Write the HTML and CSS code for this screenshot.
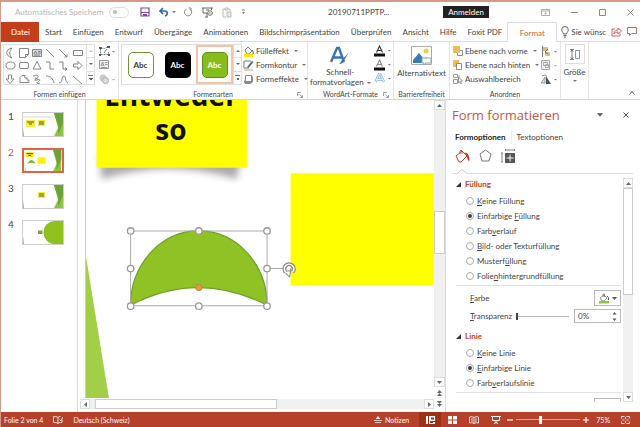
FILE: index.html
```html
<!DOCTYPE html>
<html lang="de">
<head>
<meta charset="utf-8">
<title>20190711PPTP...</title>
<link rel="stylesheet" href="styles.css">
</head>
<body>
<div class="app">
  <header class="titlebar">
    <label class="autosave">Automatisches Speichern <input type="checkbox" class="switch"></label>
    <div class="quick">
      <button aria-label="Speichern"><svg width="10" height="10" viewBox="0 0 10 10"><path d="M1 1h8v8H1z" fill="#fff" stroke="#7b45a0" stroke-width="1.2"/><path d="M1 5.5h8" stroke="#7b45a0"/><path d="M3 9V7h4v2" fill="#7b45a0"/></svg></button>
      <button aria-label="Rückgängig"><svg width="10" height="10" viewBox="0 0 10 10"><path d="M4 1 1 4l3 3M1.500 4H6c3 0 3 4.500 0 5" fill="none" stroke="#2f6da8" stroke-width="1.600"/></svg></button>
      <span class="caret"></span>
      <button aria-label="Wiederholen"><svg width="10" height="10" viewBox="0 0 10 10"><path d="M7 2.200A3.600 3.600 0 1 1 3.500 2M5.500 1H8v3" fill="none" stroke="#888"/></svg></button>
      <button aria-label="Präsentation"><svg width="11" height="11" viewBox="0 0 11 11"><path d="M0 1h11M1 1v5h4M5 6v4M3 10h3M4 3h3M9.500 1v2" fill="none" stroke="#666"/><circle cx="8" cy="6" r="2.300" fill="#fff" stroke="#666"/><path d="m7.500 5 1.500 1-1.500 1z" fill="#666"/></svg></button>
      <button aria-label="Einfügen"><svg width="10" height="11" viewBox="0 0 10 11"><path d="M3 2H1v8h3M6 2h2v2M3 1h3v2H3z" fill="none" stroke="#bbb"/><path d="M5 5h4v5H5z" fill="#e8e8e8" stroke="#bbb"/></svg></button>
      <button aria-label="Anpassen"><svg width="5" height="6" viewBox="0 0 5 6"><path d="M1 1h3" stroke="#777"/><path d="M1 3h3L2.500 5z" fill="#777"/></svg></button>
    </div>
    <span class="filename">20190711PPTP...</span>
    <button class="login">Anmelden</button>
    <div class="winctl">
      <button aria-label="Menüband"><svg width="9" height="7" viewBox="0 0 9 7"><path d="M.5.5h8v6h-8zM.5 2h8M4.500 5.500v-2M3.500 4.500l1-1 1 1" fill="none" stroke="#999" stroke-width=".8"/></svg></button>
      <button aria-label="Minimieren"><svg width="7" height="7" viewBox="0 0 7 7"><path d="M0 3.500h7" stroke="#888"/></svg></button>
      <button aria-label="Maximieren"><svg width="7" height="7" viewBox="0 0 7 7"><path d="M.5.5h6v6h-6z" fill="none" stroke="#888"/></svg></button>
      <button aria-label="Schließen"><svg width="7" height="7" viewBox="0 0 7 7"><path d="m.5.5 6 6m0-6-6 6" stroke="#777" stroke-width=".8"/></svg></button>
    </div>
  </header>

  <nav class="tabs">
    <button class="tab file">Datei</button>
    <button class="tab">Start</button>
    <button class="tab">Einfügen</button>
    <button class="tab">Entwurf</button>
    <button class="tab">Übergänge</button>
    <button class="tab">Animationen</button>
    <button class="tab">Bildschirmpräsentation</button>
    <button class="tab">Überprüfen</button>
    <button class="tab">Ansicht</button>
    <button class="tab">Hilfe</button>
    <button class="tab">Foxit PDF</button>
    <button class="tab active">Format</button>
    <div class="tellme">
      <svg width="8" height="12" viewBox="0 0 8 12"><path d="M2.500 8C2.500 6.500.7 6 .7 3.800a3.300 3.300 0 0 1 6.600 0C7.300 6 5.500 6.500 5.500 8zM2.500 9.500h3M3 11h2" fill="none" stroke="#555" stroke-width=".9"/></svg>
      <span class="hint">Sie wünsc</span>
      <button aria-label="Freigeben"><svg width="11" height="10" viewBox="0 0 11 10"><path d="M4 2H1v7h8V6.500M3 7c0-3 2-4 4-4V1l3.500 3L7 7V5C5.500 5 4 5.500 3 7z" fill="none" stroke="#c9564b" stroke-width=".9"/></svg></button>
      <button aria-label="Kommentare"><svg width="10" height="9" viewBox="0 0 10 9"><path d="M.5.5h9v6h-5l-2 2v-2h-2z" fill="none" stroke="#c9564b" stroke-width=".9"/></svg></button>
    </div>
  </nav>

  <section class="ribbon">
    <div class="group g-insert">
      <div class="row">
        <div class="gallery shapes">
          <svg width="82" height="39" viewBox="0 0 82 39" fill="none" stroke="#777" stroke-width=".9">
            <path d="M8 3C1 4 1 11 8 13 5 10 5 6 8 3z"/><path d="M15.500 3.500h9v6l-3 3h-6zM21.500 12.500v-3h3"/><path d="M28.500 4.500h9v7h-9z" fill="#d3dae6"/><path d="m30 9 1.500-3 1.500 3M34 6.500h2.500M34 8h2.500M30 10h6"/><path d="m42 4 8 8M55 4l8 8m0-2.500V12h-2.500"/><path d="M69.500 5.500h9v5h-9z"/>
            <ellipse cx="6.500" cy="20.500" rx="4.500" ry="3.500"/><rect x="15.500" y="17.500" width="9" height="6" rx="1.500"/><path d="m33 16.500 4 7.500h-8zM42 17h4v7h4M55 17h4v7h4m-2-1.500 2 1.500-2 1.500"/><path d="M69.500 19h4.500v-2.500l4 4-4 4V22h-4.500z"/>
            <path d="M4.500 30v4H2l4 4.500 4-4.500H7.500v-4z"/><path d="M16 37.500v-5l2-2h3c-1 2 0 3 2 2.500v2l2 0v2.500z"/><path d="M29 31c3-2 7 0 4 2s-3 3 0 2c3-1 4 0 1 2m2 1-2 1-1-2M31 33l3 1"/><path d="M42 31c5 0 7 3 8 7M55 38c4 0 2-7 5-7 2 0 1 6 4 7M69 31l9 8"/>
          </svg>
          <div class="spin"><button class="up" aria-label="Nach oben" disabled></button><button aria-label="Nach unten"></button><button class="more" aria-label="Mehr Formen"></button></div>
        </div>
        <div class="stack icons">
          <button aria-label="Form bearbeiten"><svg width="16" height="10" viewBox="0 0 16 10"><path d="M1.500 2.500h4l3-1.500M1.500 2.500v6h8V6" fill="none" stroke="#777" stroke-dasharray="2 1"/><path d="M0 1h3v2H0zM8 0h3v2H8zM0 8h2v2H0zM9 8h2v2H9z" fill="#557"/><path d="m5 7 3-4" stroke="#49b"/><path d="M13 5h3l-1.500 1.500z" fill="#777"/></svg></button>
          <button aria-label="Textfeld"><svg width="16" height="10" viewBox="0 0 16 10"><path d="M.5.5h9v8h-9z" fill="#eee" stroke="#999"/><path d="M2 6l1.500-4L5 6M2.500 5h2M6 2.500h2.500M6 4.500h2.500M2 7.500h6" fill="none" stroke="#777" stroke-width=".7"/></svg></button>
          <button aria-label="Formen zusammenführen"><svg width="16" height="10" viewBox="0 0 16 10"><circle cx="4" cy="4" r="3.500" fill="#ccc"/><circle cx="6.500" cy="6.500" r="3" fill="#ddd" stroke="#aaa"/><path d="M13 5h3l-1.500 1.500z" fill="#aaa"/></svg></button>
        </div>
      </div>
      <div class="caption">Formen einfügen</div>
    </div>

    <div class="group g-styles">
      <div class="row">
        <div class="gallery presets">
          <button class="preset p-outline"><span>Abc</span></button>
          <button class="preset p-black"><span>Abc</span></button>
          <button class="preset p-green"><span>Abc</span></button>
          <div class="spin"><button class="up" aria-label="Nach oben"></button><button aria-label="Nach unten"></button><button class="more" aria-label="Mehr Formate"></button></div>
        </div>
        <div class="stack">
          <button><svg width="11" height="11" viewBox="0 0 11 11"><path d="m2 4 3-3 4 4-3 3H4z" fill="#fff" stroke="#777" stroke-width=".9"/><path d="M9 4q2 2 1 4" fill="none" stroke="#369"/><path d="M1 8h9v3H1z" fill="#ffe800"/></svg>Fülleffekt<i class="caret"></i></button>
          <button><svg width="11" height="11" viewBox="0 0 11 11"><path d="M1 1h7M1 1v7h5" fill="none" stroke="#777"/><path d="m4 7 5-6 1.500 1-5 6z" fill="#336aa6"/><path d="M1 9h9v2H1z" fill="#ddd5b0"/></svg>Formkontur<i class="caret"></i></button>
          <button><svg width="11" height="11" viewBox="0 0 11 11"><path d="M3 2q6-2 7 1v5l-3 2H2L1 8z" fill="#888"/><path d="M2.500 1.500h6v6h-6z" fill="#fff" stroke="#888"/></svg>Formeffekte<i class="caret"></i></button>
        </div>
      </div>
      <div class="caption">Formenarten<svg class="launch" width="6" height="6" viewBox="0 0 6 6"><path d="M.5 4V.5H4M2.500 2.500l3 3M5.500 3v2.500H3" fill="none" stroke="#888" stroke-width=".8"/></svg></div>
    </div>

    <div class="group g-wordart">
      <div class="row">
        <button class="big"><svg width="20" height="20" viewBox="0 0 20 20"><path d="M1 16 7 2h2l5 14M3.500 11.500h8" fill="none" stroke="#3874b5" stroke-width="2.400"/><path d="m18.500 7-4 7-2-1z" fill="#777"/><path d="M14 13c1 3-2 5-5 5 2-1 2-4 4-5z" fill="#3874b5"/></svg><span>Schnell-<br>formatvorlagen<i class="caret"></i></span></button>
        <div class="stack icons">
          <button aria-label="Textfüllung"><svg width="17" height="12" viewBox="0 0 17 12"><path d="M2.500 7.500 5.500 1l3 6.500M3.500 5.500h4" fill="none" stroke="#333" stroke-width="1.100"/><path d="M0 8.500h11v3H0z" fill="#111"/><path d="M14 5h3l-1.500 1.500z" fill="#777"/></svg></button>
          <button aria-label="Textkontur"><svg width="17" height="12" viewBox="0 0 17 12"><path d="M2.500 7.500 5.500 1l3 6.500M3.500 5.500h4" fill="none" stroke="#888" stroke-width="1.100"/><path d="M0 8.500h11v3H0z" fill="#111"/><path d="M14 5h3l-1.500 1.500z" fill="#777"/></svg></button>
          <button aria-label="Texteffekte"><svg width="17" height="12" viewBox="0 0 17 12"><path d="M1.500 9 5 1h1l4 8M3 6.500h5.500" fill="none" stroke="#8fb8e0" stroke-width="2.500"/><path d="M1.500 9 5 1h1l4 8M3 6.500h5.500" fill="none" stroke="#fff" stroke-width=".8"/><path d="M14 5h3l-1.500 1.500z" fill="#777"/></svg></button>
        </div>
      </div>
      <div class="caption">WordArt-Formate<svg class="launch" width="6" height="6" viewBox="0 0 6 6"><path d="M.5 4V.5H4M2.500 2.500l3 3M5.500 3v2.500H3" fill="none" stroke="#888" stroke-width=".8"/></svg></div>
    </div>

    <div class="group g-access">
      <div class="row">
        <button class="big"><svg width="22" height="20" viewBox="0 0 22 20"><path d="M.5.500h20v18H.5z" fill="#fff" stroke="#aaa"/><circle cx="15" cy="5" r="2.500" fill="#f4cf3a"/><path d="m2 14 6-7 5 6 2-2 4 4v2H2z" fill="#3b7ab8"/><path d="M11 12h9v5h-5l-2 2v-2h-2z" fill="#fff" stroke="#8aa"/></svg><span>Alternativtext</span></button>
      </div>
      <div class="caption">Barrierefreiheit</div>
    </div>

    <div class="group g-arrange">
      <div class="row">
        <div class="stack">
          <button><svg width="10" height="10" viewBox="0 0 10 10"><path d="M4.500 4.500h5v5h-5z" fill="#fff" stroke="#888"/><path d="M0 0h7v7H0z" fill="#f0b95c"/></svg>Ebene nach vorne<i class="caret"></i></button>
          <button><svg width="10" height="10" viewBox="0 0 10 10"><path d="M0 0h6v7H0z" fill="#f0b95c"/><path d="M3.500 3.500h5v6h-5z" fill="#fff" stroke="#888"/></svg>Ebene nach hinten<i class="caret"></i></button>
          <button><svg width="10" height="10" viewBox="0 0 10 10"><path d="M.5.500h4v3h-4zM.5 5.500h4v4h-4zM6 1v3" fill="none" stroke="#999"/><path d="m5.500 3 4 4-2 .3 1 2-1 .5-1-2-1 1z" fill="#fff" stroke="#666" stroke-width=".7"/></svg>Auswahlbereich</button>
        </div>
        <div class="stack icons">
          <button aria-label="Ausrichten"><svg width="17" height="11" viewBox="0 0 17 11"><path d="M1.500 0v11" stroke="#777"/><path d="M2 1h5v4H2z" fill="#f0b95c"/><path d="M4 6h5v4H4z" fill="#e3bd79"/><path d="m7 3-3 3 3 2" stroke="#3874b5" fill="none"/><path d="M13 5h3l-1.500 1.500z" fill="#777"/></svg></button>
          <button aria-label="Gruppieren"><svg width="17" height="11" viewBox="0 0 17 11"><path d="M.5.500h8v9h-8zM2.500 2.500h4v3h-4zM4.500 4.500h3v3h-3z" fill="#eee" stroke="#aaa"/><path d="M13 5h3l-1.500 1.500z" fill="#aaa"/></svg></button>
          <button aria-label="Drehen"><svg width="17" height="11" viewBox="0 0 17 11"><path d="M0 9h4V3zM1 2q3-2 5 0" fill="#ddd" stroke="#888" stroke-width=".8"/><path d="M5 2v8h5z" fill="#456"/><path d="M13 5h3l-1.500 1.500z" fill="#777"/></svg></button>
        </div>
      </div>
      <div class="caption">Anordnen</div>
    </div>

    <div class="group g-size">
      <button class="size"><span class="sizebox"><svg width="10" height="11" viewBox="0 0 10 11"><path d="M2 1v9M.5 2.500 2 1l1.500 1.500M.5 8.500 2 10l1.500-1.500M0 .5h4M0 10.500h4" fill="none" stroke="#557" stroke-width=".8"/><path d="M5.500 1.500h4v8h-4z" fill="#fff" stroke="#7a99b8"/></svg></span>Größe<i class="caret"></i></button>
    </div>
    <button class="collapse" aria-label="Menüband reduzieren"><svg width="6" height="4" viewBox="0 0 6 4"><path d="m.5 3.500 2.500-3 2.500 3" fill="none" stroke="#666"/></svg></button>
  </section>

  <main class="work">
    <ol class="thumbs">
      <li><span>1</span><svg viewBox="0 0 40 23"><path d="M0 4h30" stroke="#ccc" stroke-width=".7"/><path d="M3 7h9v7H3zM15 7h7v6h-7z" fill="#f4ec3c"/><path d="M4 9h7M6 11h3M16 9h5M16 11h5" stroke="#553"/><path d="M31 0h9v23h-9l4-8z" fill="#8cc63f"/><path d="m31 0 4 12v10L40 10V0z" fill="#6aa338"/><path d="M0 15l1 8H0z" fill="#8cc63f"/></svg></li>
      <li class="current"><span>2</span><svg viewBox="0 0 40 23"><path d="M1 2h9v6H1zM14 8h9v7h-9z" fill="#fff200"/><path d="M2 4h7M4 6h3" stroke="#331"/><path d="M3 15q4-8 9 0-4-2-9 0z" fill="#7cb82f"/><path d="M31 0h9v23h-9l4-8z" fill="#8cc63f"/><path d="m31 0 4 12v10L40 10V0z" fill="#6aa338"/><path d="M0 15l1 8H0z" fill="#8cc63f"/></svg></li>
      <li><span>3</span><svg viewBox="0 0 40 23"><path d="M15 7h7v6h-7z" fill="#f4ec3c"/><path d="M16 9h5M16 11h5" stroke="#553"/><path d="M31 0h9v23h-9l4-8z" fill="#8cc63f"/><path d="m31 0 4 12v10L40 10V0z" fill="#6aa338"/><path d="M0 15l1 8H0z" fill="#8cc63f"/></svg></li>
      <li><span>4</span><svg viewBox="0 0 40 23"><path d="M40 0H32a11.500 11.500 0 0 0 0 23h8z" fill="#8fc11e"/><path d="M15 9.500h4.500V13H15z" fill="#7aa34a"/><path d="M0 15l1 8H0z" fill="#8cc63f"/></svg></li>
    </ol>

    <div class="editor">
      <div class="slide">
        <svg class="drawing" viewBox="0 0 347 298">
          <defs>
            <filter id="soft" x="-20%" y="-60%" width="140%" height="220%"><feGaussianBlur stdDeviation="3.500"/></filter>
          </defs>
          <path d="M13 56h142l-5 23Q82 58 16 79z" fill="#aaa" filter="url(#soft)"/>
          <path d="M10.500 0h150v67.500h-150z" fill="#ff0"/>
          <path d="M204 73h143v112H204z" fill="#ff0"/>
          <path d="M0 156 23 298H0z" fill="#a2cf47"/>
          <path d="M44.500 204.500A68 74 0 0 1 180.500 204.500Q112 169.500 44.500 204.500z" fill="#8fc225" stroke="#6f9d27" stroke-width="1.200"/>
          <path d="M44.500 130.500h136v74.500h-136zM180.500 168h19" fill="none" stroke="#aaa"/>
          <g fill="#fff" stroke="#999" stroke-width="1.300"><circle cx="44.500" cy="130.500" r="3.200"/><circle cx="112.500" cy="130.500" r="3.200"/><circle cx="180.500" cy="130.500" r="3.200"/><circle cx="44.500" cy="168" r="3.200"/><circle cx="180.500" cy="168" r="3.200"/><circle cx="44.500" cy="205.500" r="3.200"/><circle cx="112.500" cy="205.500" r="3.200"/><circle cx="180.500" cy="205.500" r="3.200"/></g>
          <circle cx="112.500" cy="187" r="3" fill="#ee9542" stroke="#b98a4c"/>
          <path d="M199 171.500A4.700 4.700 0 1 1 206 171.500" fill="none" stroke="#888" stroke-width="4"/><path d="M199 171.500A4.700 4.700 0 1 1 206 171.500" fill="none" stroke="#fff" stroke-width="1.600"/><path d="M199.500 170.500h4.500v-2.500M204 170.500l-1 6-4-4" fill="#fff" stroke="#888"/>
        </svg>
        <p class="headline">Entweder<br>so</p>
      </div>
      <div class="vscroll">
        <button aria-label="Nach oben"><svg width="5" height="3" viewBox="0 0 5 3"><path d="M0 3h5L2.500 0z"/></svg></button>
        <span class="track"><span class="thumb"></span></span>
        <button aria-label="Nach unten"><svg width="5" height="3" viewBox="0 0 5 3"><path d="M0 0h5L2.500 3z"/></svg></button>
        <button class="flat" aria-label="Vorherige Folie"><svg width="5" height="6" viewBox="0 0 5 6"><path d="M0 3h5L2.500 0zM0 6h5L2.500 3z"/></svg></button>
        <button class="flat" aria-label="Nächste Folie"><svg width="5" height="6" viewBox="0 0 5 6"><path d="M0 0h5L2.500 3zM0 3h5L2.500 6z"/></svg></button>
      </div>
      <div class="hscroll">
        <button aria-label="Nach links"><svg width="3" height="5" viewBox="0 0 3 5"><path d="M3 0v5L0 2.500z"/></svg></button>
        <span class="track"><span class="thumb"></span></span>
        <button aria-label="Nach rechts"><svg width="3" height="5" viewBox="0 0 3 5"><path d="M0 0v5l3-2.500z"/></svg></button>
      </div>
    </div>

    <aside class="pane">
      <div class="panehead">
        <h1>Form formatieren</h1>
        <button aria-label="Optionen"><svg width="6" height="4" viewBox="0 0 6 4"><path d="M0 0h6L3 4z" fill="#666"/></svg></button>
        <button aria-label="Schließen"><svg width="6" height="6" viewBox="0 0 6 6"><path d="m.5.5 5 5m0-5-5 5" stroke="#555"/></svg></button>
      </div>
      <div class="panetabs"><button class="on">Formoptionen</button><button>Textoptionen</button></div>
      <div class="paneicons">
        <button aria-label="Füllung und Linie"><svg width="15" height="14" viewBox="0 0 15 14"><path d="m1 7 6-5 5 5-6 6H4z" fill="#fff" stroke="#c43e1c"/><path d="M5 5V2q1-2 2 0v3" fill="none" stroke="#c43e1c" stroke-width=".9"/><path d="M9.500 3.500q5 0 5 8-2 1-2.500-4z" fill="#c43e1c"/></svg></button>
        <button aria-label="Effekte"><svg width="13" height="13" viewBox="0 0 13 13"><path d="m6.500 1 5.500 4-2 7H3L1 5z" fill="#fff" stroke="#777"/></svg></button>
        <button aria-label="Größe und Eigenschaften"><svg width="15" height="14" viewBox="0 0 15 14"><path d="M4.500 1h9M4.500 0v2M13.500 0v2M1 4v9M0 4h2M0 13h2" stroke="#777" stroke-width=".9"/><path d="M4 4h10v10H4z" fill="#555"/><path d="M9 5.500v7M5.500 9h7" stroke="#fff"/></svg></button>
      </div>
      <div class="panebody">
        <svg class="notch" width="10" height="5" viewBox="0 0 10 5"><path d="M0 5h10L5 0z" fill="#fff"/><path d="m0 4.500 5-4 5 4" fill="none" stroke="#ccc"/></svg>
        <div class="options">
          <h2><i class="tri"></i>Füllung</h2>
          <div class="radios">
            <label><input type="radio" name="fill"><span><u>K</u>eine Füllung</span></label>
            <label><input type="radio" name="fill" checked><span>Einfarbige <u>F</u>üllung</span></label>
            <label><input type="radio" name="fill"><span>Farb<u>v</u>erlauf</span></label>
            <label><input type="radio" name="fill"><span><u>B</u>ild- oder Texturfüllung</span></label>
            <label><input type="radio" name="fill"><span>Musterf<u>ü</u>llung</span></label>
            <label><input type="radio" name="fill"><span>Folie<u>n</u>hintergrundfüllung</span></label>
          </div>
          <div class="field first"><span class="name"><u>F</u>arbe</span>
            <button class="color" aria-label="Farbe"><svg width="12" height="11" viewBox="0 0 12 11"><path d="m2 5 4-3 3 3-3 3H4zM5 4V1h1.500v3" fill="#fff" stroke="#777" stroke-width=".8"/><path d="M9 3q2 1 1.500 4" fill="none" stroke="#456"/><path d="M1 8h10v2.500H1z" fill="#92c632"/></svg><svg width="5" height="3" viewBox="0 0 5 3"><path d="M0 0h5L2.500 3z" fill="#555"/></svg></button></div>
          <div class="field"><label class="name" for="tr"><u>T</u>ransparenz</label><input id="tr" type="range" min="0" max="100" value="0">
            <span class="number"><input type="text" value="0%" aria-label="Transparenz in Prozent"><svg width="5" height="9" viewBox="0 0 5 9"><path d="M.5 2.500h4L2.500 0zM.5 6.500h4l-2 2.500z" fill="#555"/></svg></span></div>
          <h2 class="second"><i class="tri"></i>Linie</h2>
          <div class="radios">
            <label><input type="radio" name="line"><span><u>K</u>eine Linie</span></label>
            <label><input type="radio" name="line" checked><span><u>E</u>infarbige Linie</span></label>
            <label><input type="radio" name="line"><span>Farb<u>v</u>erlaufslinie</span></label>
          </div>
          <div class="field clipped"><button class="color" aria-label="Linienfarbe"><svg width="12" height="11" viewBox="0 0 12 11"><path d="M2 2.500h7" stroke="#777"/></svg></button></div>
        </div>
        <div class="vscroll inner">
          <button aria-label="Nach oben"><svg width="5" height="3" viewBox="0 0 5 3"><path d="M0 3h5L2.500 0z"/></svg></button>
          <span class="track"><span class="thumb"></span></span>
          <button aria-label="Nach unten"><svg width="5" height="3" viewBox="0 0 5 3"><path d="M0 0h5L2.500 3z"/></svg></button>
        </div>
      </div>
    </aside>
  </main>

  <footer class="status">
    <span>Folie 2 von 4</span>
    <svg width="10" height="8" viewBox="0 0 10 8"><path d="M5 1.500C4 .5 2 .5.500.500v6c2 0 3.500 0 4.500 1 1-1 2-1 4-1V4M5 1.500v6M5 1.500Q6 .5 7.500.500M6.500 3.500 8 5l2-4" fill="none" stroke="#fff" stroke-width=".8"/></svg>
    <span>Deutsch (Schweiz)</span>
    <div class="right">
      <button class="notes"><svg width="8" height="8" viewBox="0 0 8 8"><path d="M0 4.500h8M1 6.500h6M2 2.500h4M4 .5l1.500 2h-3z" fill="#fff" stroke="#fff" stroke-width=".7"/></svg>Notizen</button>
      <button class="view pressed" aria-label="Normal"><svg width="9" height="8" viewBox="0 0 9 8"><path d="M0 0h9v8H0z" fill="#fff"/><path d="M2.500 0v8M4 5.500h5M4 6.500h3" stroke="#9c3118"/><path d="M5 1.500h3v2H5z" fill="#9c3118"/></svg></button>
      <button class="view" aria-label="Foliensortierung"><svg width="9" height="8" viewBox="0 0 9 8"><path d="M0 0h4v3.500H0zM5 0h4v3.500H5zM0 4.500h4V8H0zM5 4.500h4V8H5z" fill="#fff"/></svg></button>
      <button class="view" aria-label="Leseansicht"><svg width="10" height="8" viewBox="0 0 10 8"><path d="M5 1.500v6M5 1.500Q3 0 .5 1v6Q3 6 5 7.500 7 6 9.500 7V1Q7 0 5 1.500M2 3h2M2 5h2M6 3h2M6 5h2" fill="none" stroke="#fff" stroke-width=".8"/></svg></button>
      <button class="view" aria-label="Bildschirmpräsentation"><svg width="10" height="8" viewBox="0 0 10 8"><path d="M0 .5h10M1.500.5v4h7v-4M5 4.500v2M3 7.500l2-1 2 1" fill="none" stroke="#fff"/></svg></button>
      <button aria-label="Verkleinern"><svg width="6" height="6" viewBox="0 0 6 6"><path d="M0 3h6" stroke="#fff" stroke-width="1.200"/></svg></button>
      <input class="zoom" type="range" min="0" max="100" value="37" aria-label="Zoom">
      <button aria-label="Vergrößern"><svg width="6" height="6" viewBox="0 0 6 6"><path d="M0 3h6M3 0v6" stroke="#fff" stroke-width="1.200"/></svg></button>
      <span class="percent">75%</span>
      <button class="fit" aria-label="Einpassen"><svg width="9" height="8" viewBox="0 0 9 8"><path d="M.5 2.500v-2h3M5.500.5h3v2M8.500 5.500v2h-3M3.500 7.500h-3v-2M4.500 1v2M4.500 5v2M1.500 4h2M5.500 4h2" fill="none" stroke="#fff" stroke-width=".9"/></svg></button>
    </div>
  </footer>
</div>
</body>
</html>
```
FILE: styles.css
```css
* { box-sizing: border-box; }
html, body { height: 100%; margin: 0; }
body { font: 8px/12px Lato, "Open Sans", sans-serif; color: #444; background: #fff; overflow: hidden; }
button, input { font: inherit; color: inherit; margin: 0; padding: 0; border: 0; background: none; }
button { display: flex; align-items: center; justify-content: center; white-space: nowrap; flex: none; }
svg { display: block; flex: none; }
h1, h2, p, ol { margin: 0; padding: 0; font-weight: normal; }

.app { height: 100%; display: flex; flex-direction: column; border: solid #d39a86; border-width: 2px 0 0 1px; }
.caret { width: 0; height: 0; border: 2px solid transparent; border-top-color: #777; border-bottom: 0; margin-left: 3px; display: inline-block; vertical-align: middle; }

.titlebar { display: flex; align-items: center; height: 20px; padding-right: 6px; flex: none; }
.autosave { display: flex; align-items: center; gap: 5px; width: 139px; padding-left: 14px; color: #b5b5b5; white-space: nowrap; }
.switch { appearance: none; width: 23px; height: 11px; border: 1px solid #ddd; border-radius: 6px; display: flex; align-items: center; padding-left: 3px; margin-left: auto; margin-right: 11px; }
.switch::before { content: ""; width: 4px; height: 4px; border-radius: 50%; background: #bbb; }
.quick { display: flex; align-items: center; gap: 9px; width: 188px; }
.quick .caret { margin: 0 -2px 0 -6px; }
.filename { width: 115px; text-align: left; }
.login { background: #222; color: #fff; width: 46px; height: 12px; font-size: 8px; }
.winctl { margin-left: auto; display: flex; gap: 21px; }

.tabs { display: flex; height: 20px; flex: none; border-bottom: 1px solid #ddd; }
.tab { padding: 0 5px 0 6px; margin-bottom: -1px; }
.file { background: #c43e1c; color: #fff; width: 38px; }
.active { width: 50px; padding: 0; color: #d0652f; border: solid #ddd; border-width: 1px 1px 0; background: #fff; }
.tellme { display: flex; align-items: center; gap: 2px; padding: 0 4px; flex: 1; min-width: 0; }
.tellme button { margin-left: 3px; }
.hint { white-space: nowrap; margin-right: auto; }

.ribbon { display: flex; height: 58px; flex: none; border-bottom: 1px solid #d5d5d5; position: relative; }
.group { display: flex; flex-direction: column; justify-content: space-between; border-right: 1px solid #e5e5e5; padding: 2px 2px 0; flex: none; }
.row { display: flex; height: 42px; }
.caption { text-align: center; font-size: 7px; line-height: 9px; position: relative; white-space: nowrap; }
.launch { position: absolute; right: 2px; top: 2px; }
.g-insert { width: 118px; }
.g-styles { width: 189px; }
.g-wordart { width: 86px; }
.g-access { width: 56px; }
.g-arrange { width: 111px; }
.g-size { width: 28px; }
.gallery { display: flex; border: 1px solid #ddd; height: 41px; flex: none; }
.shapes { width: 92px; }
.spin { width: 8px; display: flex; flex-direction: column; border-left: 1px solid #ddd; margin-left: auto; flex: none; }
.spin button { flex: 1; }
.spin button::before { content: ""; border: 2px solid transparent; border-top-color: #666; border-bottom: 0; }
.spin .up::before { border: 2px solid transparent; border-bottom-color: #666; border-top: 0; }
.spin .more::before { width: 5px; height: 4px; border: 0; border-top: 1px solid #777; background: conic-gradient(from -45deg at 50% 100%, #666 90deg, transparent 0) bottom / 4px 2px no-repeat; }
.spin button + button { border-top: 1px solid #ddd; }
.spin button:disabled { opacity: .4; }
.stack { display: flex; flex-direction: column; padding: 0 2px 0 1px; }
.stack button { height: 14px; justify-content: flex-start; gap: 2px; }
.stack.icons { padding: 0; margin-left: auto; }
.g-insert .icons { margin-left: 4px; }
.g-arrange .icons { padding-right: 3px; }
.presets { width: 121px; }
.preset { width: 37px; }
.preset span { display: flex; align-items: center; justify-content: center; width: 26px; height: 26px; border-radius: 5px; color: #fff; font-weight: 700; }
.p-outline span { border: 1px solid #71963a; color: #333; }
.p-black span { background: #000; }
.p-green { border: 2px solid #f5c3a8; }
.p-green span { background: #84bd1c; border: 1px solid #5f8c1f; }
.big { flex-direction: column; justify-content: flex-start; gap: 1px; line-height: 10px; padding-top: 2px; }
.g-access .row { justify-content: center; }
.g-access .big { gap: 2px; }
.size { flex-direction: column; gap: 3px; line-height: 10px; }
.size .caret { margin-left: 0; }
.sizebox { width: 20px; height: 20px; border: 1px solid #ddd; display: grid; place-items: center; }
.collapse { position: absolute; right: 5px; bottom: 4px; }

.work { display: flex; flex: 1; min-height: 0; }
.thumbs { width: 77px; list-style: none; border-right: 1px solid #ddd; padding-top: 9px; flex: none; }
.thumbs li { display: flex; height: 36px; padding-left: 7px; gap: 7px; font-size: 10px; line-height: 14px; }
.thumbs span { width: 7px; }
.thumbs svg { width: 42px; height: 25px; margin-top: 3px; border: 1px solid #ccc; }
.thumbs .current span { color: #d8503c; }
.thumbs .current svg { border: 2px solid #e2614a; }

.editor { flex: 1; min-width: 0; display: grid; grid-template-columns: 1fr 11px; grid-template-rows: 1fr 10px; gap: 1px 0; padding-bottom: 3px; }
.slide { margin-left: 7px; border-left: 1px solid #ccc; position: relative; overflow: hidden; }
.drawing { width: 348px; height: 299px; }
.headline { position: absolute; left: 10px; top: -22px; width: 150px; text-align: center; font: 700 28px/34px "Open Sans", "Noto Sans", sans-serif; color: #111; }
.vscroll { display: flex; flex-direction: column; background: #f0f0f0; grid-row: span 2; }
.vscroll button, .hscroll button { border: 1px solid #ddd; background: #fff; width: 100%; height: 10px; }
.vscroll svg, .hscroll svg { fill: #666; }
.vscroll .flat { border: 0; height: 11px; }
.track { flex: 1; display: flex; flex-direction: inherit; min-height: 0; }
.thumb { border: 1px solid #ccc; background: #fff; }
.editor > .vscroll .thumb { height: 43px; margin-top: 101px; }
.hscroll { display: flex; background: #f0f0f0; margin-left: 2px; }
.hscroll button { width: 10px; }
.hscroll .thumb { width: 182px; margin-left: 5px; }

.pane { width: 195px; padding: 0 7px 0 6px; border-left: 1px solid #ddd; display: flex; flex-direction: column; flex: none; }
.panehead { display: flex; align-items: center; height: 30px; padding-right: 4px; gap: 20px; flex: none; }
.panehead h1 { font: 13px/18px "Open Sans", "Noto Sans", sans-serif; color: #c8553f; margin-right: auto; white-space: nowrap; }
.panetabs { display: flex; height: 14px; padding-left: 3px; flex: none; }
.panetabs .on { font-weight: 700; color: #222; border-right: 1px solid #eee; padding-right: 5px; margin-right: 5px; }
.paneicons { display: flex; align-items: center; gap: 9px; height: 23px; padding-left: 3px; flex: none; }
.panebody { flex: 1; min-height: 0; display: flex; border-top: 1px solid #ddd; margin: 6px 0 10px; padding-top: 4px; position: relative; }
.notch { position: absolute; left: 5px; top: -5px; }
.options { flex: 1; min-width: 0; overflow: hidden; padding: 0 2px 0 4px; }
h2 { font-size: 8px; line-height: 12px; font-weight: 700; color: #c43e1c; display: flex; align-items: center; gap: 4px; }
.tri { border: solid transparent; border-width: 0 0 5px 5px; border-bottom-color: #333; }
.radios { padding: 3px 0 2px 10px; border-bottom: 1px solid #e2e2e2; }
.radios label { display: flex; align-items: center; gap: 3px; height: 15px; white-space: nowrap; }
.radios input { appearance: none; width: 8px; height: 8px; border: 1px solid #aaa; border-radius: 50%; background: #fff; display: grid; place-items: center; }
.radios input:checked::before { content: ""; width: 4px; height: 4px; border-radius: 50%; background: #444; }
.field { display: flex; align-items: center; height: 18px; padding-left: 14px; }
.field.first { margin-top: 3px; }
.name { white-space: nowrap; width: 46px; }
.color { width: 27px; height: 16px; border: 1px solid #bbb; gap: 2px; margin-left: auto; }
.field input[type=range] { appearance: none; width: 53px; height: 10px; background: linear-gradient(#bbb, #bbb) center / 100% 1px no-repeat; }
.field input[type=range]::-webkit-slider-thumb { appearance: none; width: 2px; height: 7px; background: #444; }
.number { width: 47px; height: 14px; border: 1px solid #bbb; margin-left: auto; display: flex; align-items: center; padding: 0 3px; }
.number input { flex: 1; min-width: 0; }
.second { margin-top: 5px; }
.clipped { margin-top: 4px; }
.inner { width: 10px; flex: none; }
.inner .thumb { height: 107px; }

.status { display: flex; align-items: center; gap: 10px; height: 15px; padding: 0 10px 0 3px; background: #b7402a; color: #fff; font-size: 7px; flex: none; white-space: nowrap; }
.right { display: flex; align-items: center; margin-left: auto; }
.notes { gap: 3px; margin-right: 10px; }
.view { width: 22px; height: 15px; }
.pressed { background: #9c3118; }
.zoom { appearance: none; width: 64px; height: 11px; margin: 0 3px; background: linear-gradient(#e5b0a3, #e5b0a3) center / 100% 1px no-repeat; }
.zoom::-webkit-slider-thumb { appearance: none; width: 3px; height: 8px; background: #fff; }
.percent { margin: 0 11px 0 7px; }
```
